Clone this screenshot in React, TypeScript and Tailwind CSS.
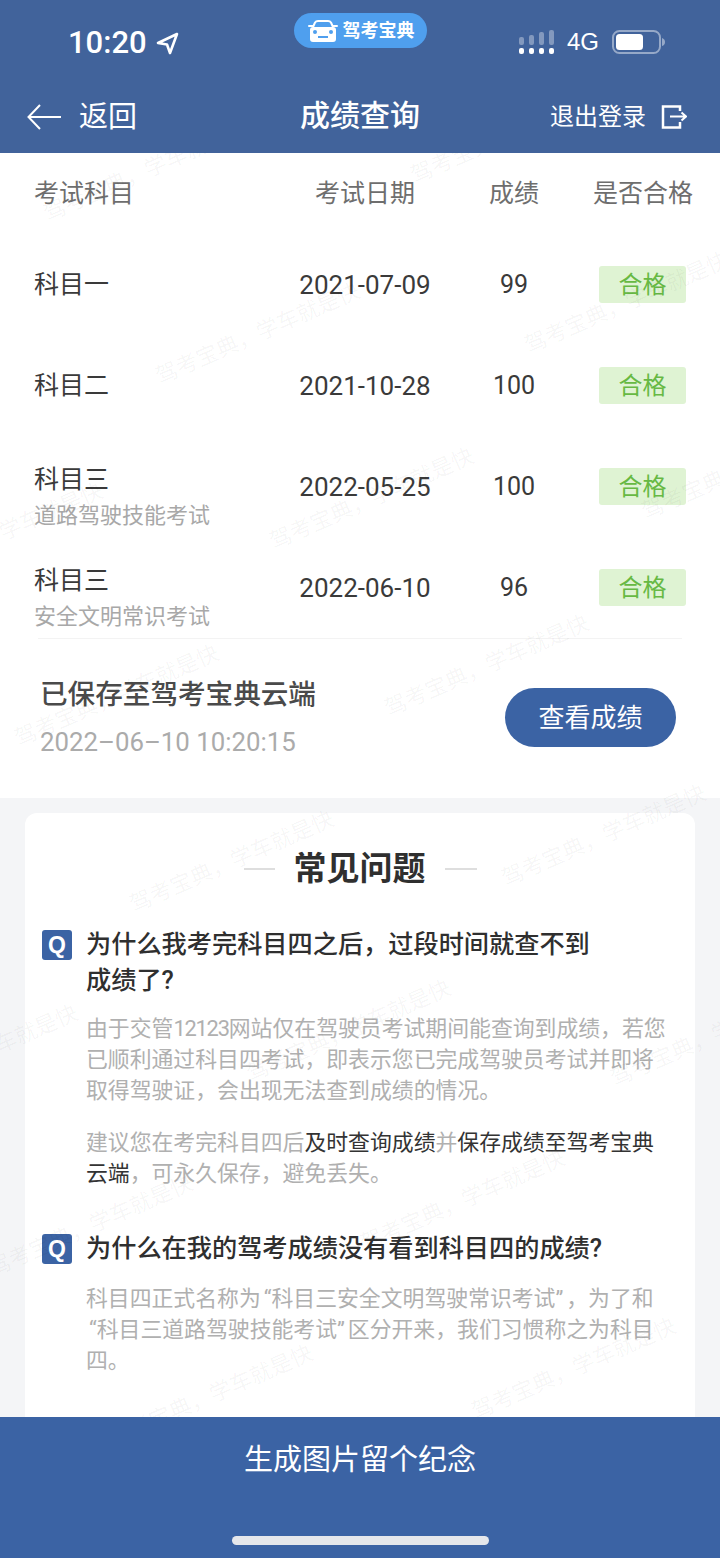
const scores = [
  { name: "科目一", date: "2021-07-09", score: "99" },
  { name: "科目二", date: "2021-10-28", score: "100" },
  { name: "科目三", sub: "道路驾驶技能考试", date: "2022-05-25", score: "100" },
  { name: "科目三", sub: "安全文明常识考试", date: "2022-06-10", score: "96" },
];

// start point of each watermark, in page coordinates
const marks = [
  [45, 215], [412, 177], [157, 378], [526, 347], [271, 543], [643, 513],
  [-100, 578], [386, 710], [16, 740], [503, 880], [131, 906], [-125, 1100],
  [248, 1075], [612, 1080], [362, 1245], [-10, 1270], [110, 1440], [473, 1413],
];

function CarIcon() {
  return (
    <svg width="32" height="24" viewBox="0 0 32 24" fill="none">
      <path d="M6 8 8 3.500Q9 2 11 2H21Q23 2 24 3.500L26 8" stroke="#fff" strokeWidth="2" />
      <path d="M2 7h4M26 7h4" stroke="#fff" strokeWidth="2" strokeLinecap="round" />
      <path d="M3 11Q3 8 6 8H26Q29 8 29 11V20Q29 23 26 23H6Q3 23 3 20Z" fill="#fff" />
      <circle cx="8" cy="13" r="2" fill="#4f9fee" />
      <circle cx="24" cy="13" r="2" fill="#4f9fee" />
      <path d="M11 18h10" stroke="#4f9fee" strokeWidth="2" />
    </svg>
  );
}

function SignalIcon() {
  return (
    <svg width="36" height="24" viewBox="0 0 36 24" fill="#fff">
      <rect x="0" y="7" width="5" height="8" rx="2" opacity=".35" />
      <rect x="10" y="5" width="5" height="10" rx="2" opacity=".35" />
      <rect x="20" y="2" width="5" height="13" rx="2" opacity=".35" />
      <rect x="30" y="0" width="5" height="15" rx="2" opacity=".35" />
      <rect x="0" y="18" width="5" height="6" rx="2" />
      <rect x="10" y="18" width="5" height="6" rx="2" />
      <rect x="20" y="18" width="5" height="6" rx="2" />
      <rect x="30" y="18" width="5" height="6" rx="2" />
    </svg>
  );
}

function BatteryIcon() {
  return (
    <svg width="53" height="24" viewBox="0 0 53 24" fill="none">
      <rect x="1" y="1" width="47" height="22" rx="6.500" stroke="#fff" strokeOpacity=".45" strokeWidth="2" />
      <rect x="4" y="4" width="27" height="16" rx="3.500" fill="#fff" />
      <path d="M50 8q3 1 3 4t-3 4Z" fill="#fff" fillOpacity=".45" />
    </svg>
  );
}

function Question({ children }: { children: React.ReactNode }) {
  return (
    <div className="flex items-start">
      <span className="mt-[3px] flex h-[30px] w-[30px] shrink-0 items-center justify-center rounded-[3px] bg-[#3b63a4] font-['Liberation_Sans',sans-serif] text-[23px] font-bold text-white">
        Q
      </span>
      <h3 className="ml-[14px] w-[524px] text-[25.2px] leading-[36px] font-medium text-[#2f2f2f]">
        {children}
      </h3>
    </div>
  );
}

export default function App() {
  return (
    <div className="flex h-[1558px] w-[720px] flex-col overflow-hidden bg-white font-['Roboto','Noto_Sans_CJK_SC',sans-serif]">
      <header className="h-[153px] shrink-0 bg-[#41639b] text-white">
        <div className="grid h-[80px] grid-cols-[294px_133px_1fr] items-start">
          <div className="flex items-center pt-[25px] pl-[68px]">
            <span className="text-[31px] leading-[36px] font-medium">10:20</span>
            <svg className="ml-[9px]" width="23" height="23" viewBox="0 0 23 23" fill="none">
              <path d="M21 2 2 11l9 1.500L14 21Z" stroke="#fff" strokeWidth="2.600" strokeLinejoin="round" />
            </svg>
          </div>
          <div className="mt-[13px] flex h-[35px] items-center justify-center gap-[4px] rounded-full bg-[#4f9fee]">
            <CarIcon />
            <span className="text-[18px] leading-none font-bold whitespace-nowrap">驾考宝典</span>
          </div>
          <div className="flex items-center pt-[30px] pl-[92px]">
            <SignalIcon />
            <span className="ml-[12px] font-['Liberation_Sans',sans-serif] text-[24px] leading-[24px]">4G</span>
            <span className="ml-[13px] flex"><BatteryIcon /></span>
          </div>
        </div>
        <div className="grid h-[73px] grid-cols-[1fr_auto_1fr] items-start">
          <div className="flex items-center pt-[19px] pl-[27px]">
            <svg width="34" height="26" viewBox="0 0 34 26" fill="none" stroke="#fff" strokeWidth="2">
              <path d="M34 13H2M13 1 1.500 13 13 25" />
            </svg>
            <span className="ml-[18px] text-[29px] leading-[36px]">返回</span>
          </div>
          <h1 className="pt-[14px] text-[30px] leading-[44px] font-medium">成绩查询</h1>
          <div className="flex items-center justify-end pt-[19px] pr-[33px]">
            <span className="text-[24px] leading-[36px]">退出登录</span>
            <svg className="ml-[15px]" width="26" height="24" viewBox="0 0 26 24" fill="none" stroke="#fff" strokeWidth="2.500">
              <path d="M19 6V1.500H2V22.500H19V17" />
              <path d="M9 11.500H25M20.500 7.500 25 11.500 20.500 15.500" strokeWidth="2" />
            </svg>
          </div>
        </div>
      </header>

      <main className="relative min-h-0 flex-1 overflow-hidden bg-[#f4f5f7]">
        <section className="bg-white">
          <div className="grid h-[81px] grid-cols-[256px_150px_148px_110px] items-center pl-[34px] text-[25px] text-[#6e6e6e]">
            <span>考试科目</span>
            <span className="text-center">考试日期</span>
            <span className="text-center">成绩</span>
            <span className="text-center">是否合格</span>
          </div>
          {scores.map((row) => (
            <div
              key={row.date}
              className="grid h-[101px] grid-cols-[256px_150px_148px_110px] items-center pl-[34px] text-[#3a3a3a]"
            >
              {row.sub ? (
                <div className="mt-[22px]">
                  <div className="text-[25px] leading-[36px]">{row.name}</div>
                  <div className="text-[22px] leading-[36px] text-[#a8a8a8]">{row.sub}</div>
                </div>
              ) : (
                <div className="text-[25px]">{row.name}</div>
              )}
              <span className="pt-[1px] text-center text-[26px]">{row.date}</span>
              <span className="pt-[1px] text-center text-[25px]">{row.score}</span>
              <span className="ml-[11px] flex h-[37px] w-[87px] items-center justify-center rounded-[3px] bg-[#dff3d3] text-[24px] text-[#67b944]">
                合格
              </span>
            </div>
          ))}
          <div className="mx-[38px] h-px bg-[#f3f3f3]" />
          <div className="flex h-[159px] items-center justify-between pr-[44px] pb-[2px] pl-[40px]">
            <div className="pt-[2px]">
              <div className="text-[27.6px] leading-[36px] font-medium text-[#4a4a4a]">已保存至驾考宝典云端</div>
              <div className="mt-[11px] text-[25.8px] leading-[36px] text-[#ababab]">2022–06–10 10:20:15</div>
            </div>
            <button className="h-[59px] w-[171px] rounded-full bg-[#3b63a4] pt-[2px] text-[26px] text-white">查看成绩</button>
          </div>
        </section>

        <section className="mx-[25px] mt-[15px] rounded-t-[12px] bg-white pt-[31px] pb-[80px] pl-[17px]">
          <div className="flex items-center justify-center pr-[17px]">
            <span className="h-[2px] w-[31px] bg-[#dedede]" />
            <h2 className="mx-[19px] text-[33px] leading-[50px] font-bold text-[#2f2f2f]">常见问题</h2>
            <span className="h-[2px] w-[32px] bg-[#dedede]" />
          </div>

          <div className="mt-[33px]">
            <Question>为什么我考完科目四之后，过段时间就查不到成绩了?</Question>
          </div>
          <div className="mt-[14px] ml-[44px] w-[586px] text-[21.85px] leading-[31px] text-[#b0b0b0]">
            <p>由于交管<span className="tracking-[-1.2px]">12123</span>网站仅在驾驶员考试期间能查询到成绩，若您已顺利通过科目四考试，即表示您已完成驾驶员考试并即将取得驾驶证，会出现无法查到成绩的情况。</p>
            <p className="mt-[21px]">
              建议您在考完科目四后<span className="text-[#333]">及时查询成绩</span>并<span className="text-[#333]">保存成绩至驾考宝典云端</span>，可永久保存，避免丢失。
            </p>
          </div>

          <div className="mt-[42px]">
            <Question>为什么在我的驾考成绩没有看到科目四的成绩?</Question>
          </div>
          <div className="mt-[16px] ml-[44px] w-[586px] text-[21.85px] leading-[31px] text-[#b0b0b0]">
            <p>
              科目四正式名称为<span className="pl-[3px]">“</span>科目三安全文明驾驶常识考试<span className="pr-[3px]">”</span>，为了和
              <br />
              <span className="pl-[3px]">“</span>科目三道路驾驶技能考试<span className="pr-[3px]">”</span>区分开来，我们习惯称之为科目
              <br />
              四。
            </p>
          </div>
        </section>

        <div className="pointer-events-none absolute inset-0">
          {marks.map(([x, y]) => (
            <span
              key={`${x}-${y}`}
              className="absolute origin-left -rotate-[23.6deg] text-[22px] leading-none whitespace-nowrap text-black/[0.045]"
              style={{ left: x, top: y - 153 - 11 }}
            >
              驾考宝典，学车就是快
            </span>
          ))}
        </div>
      </main>

      <footer className="flex h-[141px] shrink-0 flex-col items-center bg-[#3b63a4] text-white">
        <div className="mt-[21px] text-[29px] leading-[44px]">生成图片留个纪念</div>
        <div className="mt-[54px] h-[9px] w-[257px] rounded-full bg-[#e5e7eb]" />
      </footer>
    </div>
  );
}
